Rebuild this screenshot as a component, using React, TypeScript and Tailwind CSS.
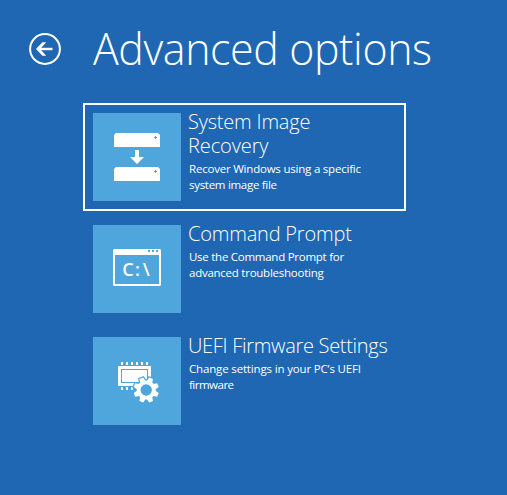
import type { ReactNode } from "react";

function BackIcon() {
  return (
    <svg width="32" height="32" viewBox="0 0 32 32" fill="none">
      <circle cx="16" cy="16" r="14.9" stroke="#fff" strokeWidth="2" />
      <path d="M23.5 16H10" stroke="#fff" strokeWidth="2.4" />
      <path d="M7 16L13.4 9.2H17.2L11.2 16L17.2 22.8H13.4Z" fill="#fff" />
    </svg>
  );
}

function Drive({ y }: { y: number }) {
  return (
    <g>
      <path d={`M21 ${y + 14}V${y + 2}L23 ${y}H65L67 ${y + 2}V${y + 14}Z`} fill="#fff" />
      <path d={`M62 ${y + 3}h1v1h1v1h-1v1h-1v-1h-1v-1h1z`} fill="#4ea6dc" />
    </g>
  );
}

function ImageRecoveryIcon() {
  return (
    <svg width="88" height="88" viewBox="0 0 88 88">
      <Drive y={20} />
      <path d="M42 37H46V44H51L44 51L37 44H42Z" fill="#fff" />
      <Drive y={54} />
    </svg>
  );
}

function CommandIcon() {
  return (
    <svg width="88" height="88" viewBox="0 0 88 88">
      <path
        fillRule="evenodd"
        d="M21 24H67L68 25V60L67 61H21L20 60V25ZM22 30V59H66V30ZM55 25V27H57V25ZM59 25V27H61V25ZM63 25V27H65V25Z"
        fill="#fff"
      />
      <text x="29.2 42 49.8" y="51" fontSize="18" fontWeight="600" fill="#fff">
        C:\
      </text>
    </svg>
  );
}

const pins = [28, 33, 38, 43, 48, 53];
const teeth = [22.5, 67.5, 112.5, 157.5, 202.5, 247.5, 292.5, 337.5];

function Cog({ outline }: { outline?: boolean }) {
  const color = outline ? "#4ea6dc" : "#fff";
  return (
    <g transform="translate(53.2 53)" fill={color} stroke={outline ? color : "none"} strokeWidth="2.4">
      <circle r="9.6" />
      {teeth.map((a) => (
        <path key={a} d="M-3 -8L-2.1 -12.7H2.1L3 -8Z" transform={`rotate(${a})`} />
      ))}
    </g>
  );
}

function FirmwareIcon() {
  return (
    <svg width="88" height="88" viewBox="0 0 88 88">
      <rect x="25" y="29" width="33" height="20" fill="#fff" />
      <rect x="28.5" y="32.5" width="26" height="13" fill="none" stroke="#4ea6dc" />
      {pins.map((x) => (
        <g key={x} fill="#fff">
          <rect x={x} y="25" width="2" height="3" />
          <rect x={x} y="50" width="2" height="3" />
        </g>
      ))}
      <Cog outline />
      <Cog />
      <circle cx="53.2" cy="53" r="5.7" fill="#4ea6dc" />
    </svg>
  );
}

function Option({ icon, title, children, selected }: { icon: ReactNode; title: ReactNode; children: ReactNode; selected?: boolean }) {
  return (
    <button className={`flex h-[108px] w-[323px] items-start border-2 p-2 text-left ${selected ? "border-white" : "border-transparent"}`}>
      <span className="size-[88px] shrink-0 bg-[#4ea6dc]">{icon}</span>
      <span className="block pl-[7px] whitespace-nowrap">
        <span className="-mt-[3px] block text-[20px] leading-6 font-light">{title}</span>
        <span className="mt-[3px] block pl-px text-[11.5px] leading-4">{children}</span>
      </span>
    </button>
  );
}

export default function App() {
  return (
    <main className="h-[495px] w-[507px] overflow-hidden bg-[#1f67b3] font-['Open_Sans','Noto_Sans',sans-serif] text-white">
      <header className="flex h-[103px] items-start pl-[29px]">
        <button aria-label="Back" className="mt-[33px] size-8">
          <BackIcon />
        </button>
        <h1 className="mt-[18px] ml-8 origin-left scale-x-[0.953] text-[45px] leading-[60px] font-light tracking-[-0.4px] whitespace-nowrap">Advanced options</h1>
      </header>
      <section className="flex flex-col gap-1 pl-[83px]">
        <Option
          selected
          icon={<ImageRecoveryIcon />}
          title={
            <>
              <span className="block tracking-[-0.2px]">System Image</span>
              <span className="block tracking-[-0.1px]">Recovery</span>
            </>
          }
        >
          <span className="block tracking-[-0.21px]">Recover Windows using a specific</span>
          <span className="block tracking-[-0.29px]">system image file</span>
        </Option>
        <Option icon={<CommandIcon />} title={<span className="block tracking-[-0.2px]">Command Prompt</span>}>
          <span className="block tracking-[-0.26px]">Use the Command Prompt for</span>
          <span className="block tracking-[-0.25px]">advanced troubleshooting</span>
        </Option>
        <Option icon={<FirmwareIcon />} title={<span className="block tracking-[-0.3px]">UEFI Firmware Settings</span>}>
          <span className="block tracking-[-0.16px]">Change settings in your PC’s UEFI</span>
          <span className="block tracking-[-0.5px]">firmware</span>
        </Option>
      </section>
    </main>
  );
}
